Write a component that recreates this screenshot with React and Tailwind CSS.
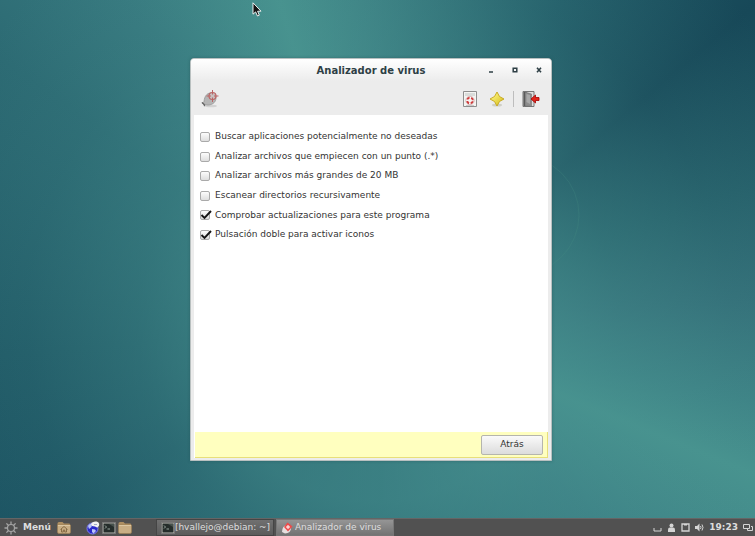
import { useState } from "react";

const OPTIONS = [
  { id: "pua", label: "Buscar aplicaciones potencialmente no deseadas", checked: false },
  { id: "hidden", label: "Analizar archivos que empiecen con un punto (.*)", checked: false },
  { id: "large", label: "Analizar archivos más grandes de 20 MB", checked: false },
  { id: "recursive", label: "Escanear directorios recursivamente", checked: false },
  { id: "updates", label: "Comprobar actualizaciones para este programa", checked: true },
  { id: "dblclick", label: "Pulsación doble para activar iconos", checked: true },
];

function ScannerIcon() {
  return (
    <svg viewBox="0 0 18 18" className="size-[18px]" aria-hidden="true">
      <ellipse cx="10" cy="16" rx="6" ry="1.3" fill="#d2d2d2" />
      <path d="M1 12.5c1 .3 1.500 0 2-1C3.500 6 6 3.500 9 3c3-.8 6 1.500 6 5 0 3.500-2.500 6-6 6.800-2 .5-3.500.2-4.500-.3L3.500 16l-1-1.500z" fill="#b5b5b5" stroke="#8f8f8f" strokeWidth=".7" />
      <path d="M1 12.500l2.500 2.300M3.500 14.500v1.800" stroke="#666" strokeWidth="1.200" />
      <circle cx="11.500" cy="6" r="3.500" fill="#d6c6c6" fillOpacity=".6" stroke="#bb6464" strokeWidth="1.200" />
      <path d="M11.500 0v4.500M11.500 7.500V12M5.500 6H10M13 6h4.500" stroke="#bb6464" strokeWidth="1" />
    </svg>
  );
}

function ReportIcon() {
  return (
    <svg viewBox="0 0 14 16" className="h-4 w-3.5" aria-hidden="true">
      <path d="M.5.5h13v15H.5z" fill="#f4f4f2" stroke="#8e8e8e" />
      <path d="M2 2h10v3H2z" fill="#d9dcda" />
      <circle cx="7" cy="9.500" r="2.900" fill="none" stroke="#fff" strokeWidth="2.400" />
      <circle cx="7" cy="9.500" r="2.900" fill="none" stroke="#cf3d3d" strokeWidth="2" strokeDasharray="3 1.555" strokeDashoffset="-.8" />
      <circle cx="7" cy="9.500" r="4.200" fill="none" stroke="#b98080" strokeWidth=".5" />
      <path d="M3 14.500h8" stroke="#c8c8c8" />
    </svg>
  );
}

function StarIcon() {
  return (
    <svg viewBox="0 0 16 16" className="size-4" aria-hidden="true">
      <defs>
        <linearGradient id="star" x1="0" y1="0" x2="1" y2="1">
          <stop offset="0.2" stopColor="#fbf27c" />
          <stop offset="0.8" stopColor="#dcc62c" />
        </linearGradient>
      </defs>
      <ellipse cx="8" cy="14" rx="5" ry="1.500" fill="#cfcfc6" />
      <path d="M8 1l2.500 4.500L15 8l-4.500 2.500L8 15l-2.500-4.500L1 8l4.500-2.500z" fill="url(#star)" stroke="#c5a51b" strokeWidth=".9" strokeLinejoin="round" />
    </svg>
  );
}

function ExitIcon() {
  return (
    <svg viewBox="0 0 18 16" className="h-4 w-[18px]" aria-hidden="true">
      <path d="M1 .5h11v15H1z" fill="#dedede" stroke="#777" />
      <path d="M1.500 1h3v14h-3z" fill="#555" />
      <path d="M3 1l6.500 2v12.500L3 15z" fill="#8c8c8c" stroke="#666" strokeWidth=".5" />
      <path d="M4.500 3l3.500 1v9l-3.500-2z" fill="#a9a9a9" />
      <path d="M9 8l4.500-4v2.500H17v3h-3.500V12z" fill="#e1251b" stroke="#a40000" strokeWidth=".8" strokeLinejoin="round" />
    </svg>
  );
}

function FolderIcon({ home = false }) {
  return (
    <svg viewBox="0 0 14 13" className="h-[13px] w-3.5 shrink-0" aria-hidden="true">
      <path d="M.5 2.500q0-1.500 1.500-1.500h3.500L7 2.500h5q1 0 1 1v1H.5z" fill="#ad8e62" />
      <path d="M.5 4h13v7q0 1.500-1.500 1.500H2Q.5 12.500.5 11z" fill="#c9ae85" stroke="#9c7f55" strokeWidth=".7" />
      <path d="M1 4.500h12" stroke="#e5d2b0" strokeWidth=".8" />
      {home && <path d="M3.500 8.500L7 5.500l3.500 3M4.500 8v3h1.800V9h1.400v2h1.800V8" fill="none" stroke="#806540" strokeWidth=".9" />}
    </svg>
  );
}

function TerminalIcon() {
  return (
    <svg viewBox="0 0 14 12" className="h-3 w-3.5 shrink-0" preserveAspectRatio="none" aria-hidden="true">
      <path d="M.5.5h13v11H.5z" fill="#bdbdb6" stroke="#777" />
      <path d="M1.500 1.500h11v9h-11z" fill="#252d2b" />
      <path d="M3 3.500L4.500 5 3 6.500M5.500 7h2.500" fill="none" stroke="#b7c4bd" strokeWidth=".8" />
      <path d="M7 2h5v3z" fill="#46514d" />
    </svg>
  );
}

function BrowserIcon() {
  return (
    <svg viewBox="0 0 14 14" className="size-3.5 shrink-0" aria-hidden="true">
      <circle cx="6.500" cy="7.500" r="5.500" fill="#2929c9" stroke="#8080ed" />
      <path d="M2 5c1-2 3-2.500 4-2l-.5 3L3 8zM6 8l3 .5 1 1.500-2.500 2.500L6 11z" fill="#b9c4f7" />
      <path d="M5 3c1-3 7-3.500 8-.5.800 2-1 4-2 4L9 5.500 6 5z" fill="#f1f1f1" />
      <path d="M8 3.500h3" stroke="#8f9bbc" strokeWidth=".8" />
    </svg>
  );
}

function TargetIcon() {
  return (
    <svg viewBox="0 0 12 12" className="size-3 shrink-0" aria-hidden="true">
      <path d="M1 10q0-6 5-7l4 3q0 5-6 5.500z" fill="#e7dfdf" />
      <path d="M6.500.5l5 4-4.500 5-4-4.500z" fill="#ed4b4b" />
      <path d="M7 3v4M5 5h4" stroke="#fff" strokeWidth="1" />
    </svg>
  );
}

function GearIcon() {
  return (
    <svg viewBox="0 0 14 14" className="size-3.5" fill="none" stroke="#a5a5a5" aria-hidden="true">
      <circle cx="7" cy="7" r="3.500" strokeWidth="1.200" />
      <path d="M7 .5v2.700M7 10.800v2.700M.5 7h2.700M10.800 7h2.700M2.400 2.400l1.900 1.900M9.700 9.700l1.900 1.900M2.400 11.600l1.900-1.900M9.700 4.300l1.900-1.900" strokeWidth="1.300" />
    </svg>
  );
}

function Option({ id, label, defaultChecked }) {
  const [checked, setChecked] = useState(defaultChecked);

  return (
    <div className="flex h-3.5 items-center">
      <span className="relative flex size-2.5">
        <input
          id={id}
          type="checkbox"
          checked={checked}
          onChange={(e) => setChecked(e.target.checked)}
          className="size-2.5 appearance-none rounded-[2px] border border-[#aaaaaa] bg-linear-to-b from-[#fcfcfc] to-[#dedede]"
        />
        {checked && (
          <svg viewBox="0 0 12 10" className="pointer-events-none absolute top-0 left-0 h-2.5 w-3" aria-hidden="true">
            <path d="M1.500 5l3 3L11 1" fill="none" stroke="#151515" strokeWidth="1.900" />
          </svg>
        )}
      </span>
      <label htmlFor={id} className="pl-[5px] whitespace-nowrap">{label}</label>
    </div>
  );
}

function VirusWindow() {
  return (
    <main className="absolute top-[58px] left-[190px] flex w-[362px] flex-col rounded-t-[4px] border border-[#b9c0c0] bg-[#ececec] text-[9px] text-[#333333] shadow-[0_0_3px_#1d4d5380]">
      <header className="grid h-[22px] grid-cols-[1fr_auto_1fr] items-center rounded-t-[3px] bg-linear-to-b from-white to-[#ececec] text-[#2e3f45]">
        <h1 className="col-start-2 text-[10px] font-bold">Analizador de virus</h1>
        <div className="flex justify-end">
          <button aria-label="Minimizar" className="grid h-5 w-6 place-items-center">
            <svg viewBox="0 0 6 6" className="size-1.5"><path d="M1 5h4" stroke="currentColor" strokeWidth="1.500" /></svg>
          </button>
          <button aria-label="Maximizar" className="grid h-5 w-6 place-items-center">
            <svg viewBox="0 0 6 6" className="size-1.5"><path d="M1.200 1.200h3.600v3.600H1.200z" fill="none" stroke="currentColor" strokeWidth="1.500" /></svg>
          </button>
          <button aria-label="Cerrar" className="grid h-5 w-6 place-items-center">
            <svg viewBox="0 0 6 6" className="size-1.5"><path d="M1 .8l4 4.400M5 .8L1 5.200" stroke="currentColor" strokeWidth="1.600" /></svg>
          </button>
        </div>
      </header>

      <nav className="flex h-[34px] items-center pt-0.5 pr-[11px] pl-2.5">
        <button aria-label="Analizar"><ScannerIcon /></button>
        <div className="ml-auto flex items-center">
          <button aria-label="Informes"><ReportIcon /></button>
          <button aria-label="Novedades" className="ml-3"><StarIcon /></button>
          <span className="mx-2 h-4 w-px bg-[#bdbdbd]" />
          <button aria-label="Salir"><ExitIcon /></button>
        </div>
      </nav>

      <div className="mx-[3px] mb-0.5 bg-white">
        <div className="flex h-[317px] flex-col px-1.5 pt-[15px]">
          <div className="flex h-28 flex-col justify-between">
            {OPTIONS.map((o) => (
              <Option key={o.id} id={o.id} label={o.label} defaultChecked={o.checked} />
            ))}
          </div>
        </div>
        <footer className="ml-px flex h-[26px] items-center justify-end border-r border-b border-[#e8df7a] bg-[#ffffbf] pr-1">
          <button className="h-5 w-[62px] rounded-[2px] border border-[#b5b5ad] bg-linear-to-b from-[#fafafa] to-[#dcdcdc]">Atrás</button>
        </footer>
      </div>
    </main>
  );
}

function Taskbar() {
  return (
    <footer className="mt-auto flex h-[18px] items-center border-t border-[#656565] bg-[#515151] text-[9px] text-[#dedede]">
      <button className="flex items-center gap-[5px] pl-1 font-bold"><GearIcon />Menú</button>
      <div className="ml-1.5 flex items-center">
        <button aria-label="Carpeta personal"><FolderIcon home /></button>
        <button aria-label="Navegador" className="ml-[15px]"><BrowserIcon /></button>
        <button aria-label="Terminal" className="ml-0.5"><TerminalIcon /></button>
        <button aria-label="Archivos" className="ml-0.5"><FolderIcon /></button>
      </div>
      <div className="ml-6 flex gap-0.5">
        <button className="flex h-[17px] w-[118px] items-center gap-0.5 border border-[#454545] bg-linear-to-b from-[#707070] to-[#5b5b5b] pl-1 whitespace-nowrap">
          <span className="flex w-3"><TerminalIcon /></span>[hvallejo@debian: ~]
        </button>
        <button className="flex h-[17px] w-[118px] items-center gap-0.5 border border-[#777777] bg-linear-to-b from-[#959595] to-[#737373] pl-1 whitespace-nowrap">
          <TargetIcon />Analizador de virus
        </button>
      </div>
      <div className="ml-auto flex items-center gap-[5px] pr-0.5">
        <svg viewBox="0 0 9 9" className="size-[9px]" aria-hidden="true"><path d="M1 5v3h7V5" fill="none" stroke="#d5d5d5" /></svg>
        <svg viewBox="0 0 9 9" className="size-[9px]" fill="#d5d5d5" aria-hidden="true"><circle cx="4.500" cy="2.500" r="2" /><path d="M1 9V6.500q0-2 2-2h3q2 0 2 2V9z" /></svg>
        <svg viewBox="0 0 9 9" className="size-[9px]" aria-hidden="true"><path d="M1 1h7v7H1z" fill="none" stroke="#d5d5d5" strokeWidth="1.300" /><path d="M3 1h3v1.500H3z" fill="#d5d5d5" /></svg>
        <svg viewBox="0 0 9 9" className="size-[9px]" aria-hidden="true"><path d="M0 3h2l2.500-2.500v8L2 6H0z" fill="#d5d5d5" /><path d="M5.500 3q1 1.500 0 3M7 1.500q2 3 0 6" fill="none" stroke="#d5d5d5" /></svg>
        <time className="font-bold">19:23</time>
        <svg viewBox="0 0 10 9" className="h-[9px] w-2.5" fill="none" stroke="#d5d5d5" aria-hidden="true"><path d="M.5 1.500h6v4h-6zM8 3.500h1.500v4h-5V6" /></svg>
      </div>
    </footer>
  );
}

export default function App() {
  return (
    <div className="relative flex min-h-screen flex-col overflow-hidden bg-[radial-gradient(circle_at_50%_60%,#47918f99_180px,#47918f66_240px,#47918f26_350px,#47918f00_480px),conic-gradient(from_0deg_at_50%_60%,#3c8083_0deg,#225c68_30deg,#174858_50deg,#245d68_70deg,#336e78_87deg,#3e8386_102deg,#48938f_112deg,#3c8085_132deg,#286570_180deg,#1a5060_238deg,#1f5865_265deg,#2c6a73_305deg,#37797f_322deg,#48938f_343deg,#3c8083_360deg)] font-['DejaVu_Sans','Noto_Sans',sans-serif]">
      {/* faint ring of the wallpaper, half hidden behind the window */}
      <svg viewBox="0 0 120 120" className="absolute top-[155px] left-[460px] size-[120px]" aria-hidden="true">
        <circle cx="60" cy="60" r="59" fill="none" stroke="#479083" strokeOpacity=".25" />
      </svg>

      <VirusWindow />

      {/* mouse pointer */}
      <svg viewBox="0 0 10 16" className="absolute top-0.5 left-[252px] h-4 w-2.5" aria-hidden="true">
        <path d="M1 .8v11.400l2.600-2.300L5.500 14l1.800-.8-1.700-4H9z" fill="#111" stroke="#fff" strokeWidth=".9" />
      </svg>

      <Taskbar />
    </div>
  );
}
